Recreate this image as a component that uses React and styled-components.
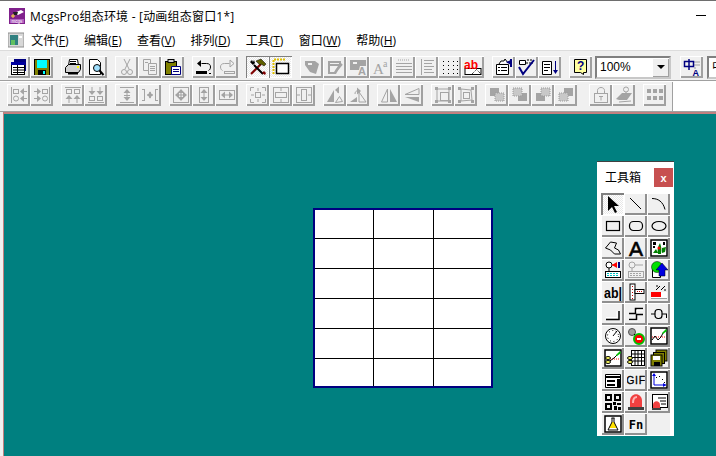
import React from 'react';
import styled, { createGlobalStyle } from 'styled-components';

const TABLE_ROWS = [0, 1, 2, 3, 4, 5];
const TABLE_COLS = [0, 1, 2];

// ------ icons, all on an 18x18 grid
const arrow = (x, y, dir) => {
    const d = {
        l: `M${x} ${y}l4 -3.5v7z`,
        r: `M${x} ${y}l-4 -3.5v7z`,
        u: `M${x} ${y}l-3.5 4h7z`,
        d: `M${x} ${y}l-3.5 -4h7z`,
    };
    return <path d={d[dir]} fill="currentColor" stroke="none" />;
};

const ln = (d, w = 1) => <path d={d} fill="none" stroke="currentColor" strokeWidth={w} />;

const layers = (a, b) => (
    <>
        <rect x={a} y={b} width="9" height="8" fill="currentColor" />
        <rect x={a === 2 ? 7 : 2} y={b === 2 ? 7 : 2} width="9" height="8" fill="#c8c8c8" />
        <rect x={a === 2 ? 7 : 2} y={b === 2 ? 7 : 2} width="9" height="8" fill="none" stroke="#9a9a9a" strokeDasharray="1 1" />
    </>
);

const icons = {
    newWin: (
        <>
            <rect x="4.5" y="1.5" width="11" height="11" fill="#fff" stroke="#000080" />
            <rect x="4" y="1" width="12" height="3" fill="#000080" />
            <rect x="1.5" y="4.5" width="13" height="12" fill="#fff" stroke="#000" />
            <rect x="1" y="4" width="14" height="3" fill="#0000a0" />
            {ln('M7.5 7v9M3 9.5h11M3 12h11M3 14.5h11', 1)}
        </>
    ),
    save: (
        <>
            <rect x="1" y="1" width="16" height="16" fill="#000" />
            <rect x="2" y="2" width="14" height="15" fill="#808000" />
            <rect x="4" y="2" width="10" height="8" fill="#00ffff" />
            <rect x="5" y="12" width="8" height="5" fill="#000" />
            <rect x="10" y="13" width="2" height="3" fill="#00ffff" />
        </>
    ),
    print: (
        <>
            <path d="M5.5 1.5h8l1 6h-10z" fill="#fff" stroke="#000" />
            <path d="M1.5 9.5l3-3h12v5l-2 3h-13z" fill="#d0d0d0" stroke="#000" />
            <path d="M4 15.5h10" stroke="#000" strokeWidth="2" />
            <rect x="13" y="8" width="2" height="2" fill="#ff0" />
            {ln('M6 3.5h6M6 5.5h6')}
        </>
    ),
    preview: (
        <>
            <path d="M2.5 1.5h8l3 3v12h-11z" fill="#fff" stroke="#000" />
            <circle cx="10" cy="10" r="3.5" fill="#a0e0ff" stroke="#000" />
            <path d="M12.5 12.5l4 4.5" stroke="#000" strokeWidth="2" />
        </>
    ),
    cut: (
        <>
            {ln('M6 1l5 10M12 1l-5 10')}
            <circle cx="6" cy="14" r="2.5" fill="none" stroke="currentColor" />
            <circle cx="12" cy="14" r="2.5" fill="none" stroke="currentColor" />
        </>
    ),
    copy: (
        <>
            <path d="M2.5 1.5h7v11h-7z" fill="#f0f0f0" stroke="currentColor" />
            <path d="M7.5 5.5h8v11h-8z" fill="#f0f0f0" stroke="currentColor" />
            {ln('M9 8.5h5M9 10.5h5M9 12.5h5M4 4.5h3')}
        </>
    ),
    paste: (
        <>
            <rect x="1.5" y="3.5" width="11" height="13" fill="#808000" stroke="#000" />
            <rect x="4" y="1.5" width="6" height="3" fill="#d0d0d0" stroke="#000" />
            <path d="M7.5 8.5h9v8h-9z" fill="#fff" stroke="#000080" />
            <path d="M9 11.5h6M9 13.5h6" stroke="#000080" />
        </>
    ),
    undo: (
        <>
            <path d="M6.5 5.5h5c3 0 4 1.5 4 3.5s-1 3-2 3.5" fill="none" stroke="#000" />
            <path d="M6 2l-4 3.5 4 3.5z" fill="#000" />
            <rect x="1" y="13" width="11" height="3" fill="#000" />
            {ln('M14 15.5h2')}
        </>
    ),
    redo: (
        <>
            {ln('M11.5 5.5h-5c-3 0-4 1.5-4 3.5s1 3 2 3.5')}
            <path d="M12 2l4 3.5-4 3.5z" fill="none" stroke="currentColor" />
            <rect x="6.5" y="13.5" width="10" height="2" fill="none" stroke="currentColor" />
        </>
    ),
    tools: (
        <>
            <path d="M2 16l10-10" stroke="#800000" strokeWidth="2" />
            <path d="M7 3l5-2 5 5-2 2-3-2-1 1-2-2z" fill="#606000" stroke="#000" strokeWidth=".5" />
            <path d="M14 16l-9-9" stroke="#000" strokeWidth="2" />
            <path d="M1 4l2-2 1 2 1-2 1 3-2 2z" fill="#000" />
            <path d="M13 15l3 2 1-2-2-2z" fill="#800000" />
        </>
    ),
    frame: (
        <>
            <path d="M1.5 16v-14.500h12" fill="none" stroke="#e0c000" strokeWidth="2" strokeDasharray="2 1" />
            <rect x="4.500" y="5.500" width="12" height="10" fill="#fff" stroke="#000" strokeWidth="1.500" />
        </>
    ),
    tag1: (
        <>
            <path d="M2 3h10l4 3-3 10-6-2-5-7z" fill="currentColor" />
            <rect x="5" y="5" width="4" height="2" fill="#f0f0f0" />
            {ln('M8 10l5 4', 1)}
        </>
    ),
    tag2: (
        <>
            <path d="M2 3h13v4l-5 9h-8z" fill="currentColor" />
            <rect x="4" y="5" width="9" height="1" fill="#f0f0f0" />
            <path d="M4 8h8l-4 6h-4z" fill="#f0f0f0" />
            <path d="M10 13l6-7" stroke="currentColor" strokeWidth="2" />
        </>
    ),
    tag3: (
        <>
            <path d="M1 2h16v6h-6l-1 4h-9z" fill="currentColor" />
            <rect x="4" y="4" width="4" height="2" fill="#f0f0f0" />
            <text x="9" y="17" fontFamily="Liberation Sans" fontSize="11" fontWeight="700" fill="currentColor">A</text>
        </>
    ),
    aa: (
        <>
            <text x="1" y="16" fontFamily="Liberation Serif" fontSize="15" fill="currentColor">A</text>
            <text x="11" y="9" fontFamily="Liberation Serif" fontSize="10" fill="currentColor">a</text>
        </>
    ),
    lines: (
        <>
            <path d="M3 2h12" stroke="currentColor" strokeDasharray="1 1" />
            <path d="M1 5h16v1h-16zM1 8h16v1h-16zM1 11h16v1h-16zM1 14h16v1h-16z" fill="currentColor" />
        </>
    ),
    list: (
        <>
            {ln('M3.500 1v16')}
            <path d="M6 2h10v1h-10zM6 5h8v1h-8zM6 8h10v1h-10zM6 11h8v1h-8zM6 14h10v1h-10z" fill="currentColor" />
        </>
    ),
    dots: (
        <path d="M2 3h1v1h-1zM7 3h1v1h-1zM12 3h1v1h-1zM16 3h1v1h-1zM2 7h1v1h-1zM7 7h1v1h-1zM12 7h1v1h-1zM16 7h1v1h-1zM2 11h1v1h-1zM7 11h1v1h-1zM12 11h1v1h-1zM16 11h1v1h-1zM2 15h1v1h-1zM7 15h1v1h-1zM12 15h1v1h-1zM16 15h1v1h-1z" fill="#000" />
    ),
    ab: (
        <>
            <rect x="1" y="10.500" width="16" height="6" fill="#fff" stroke="#000" />
            <path d="M11 10l6 6M8 16l4-4" stroke="#000" strokeDasharray="1 1" />
            <text x="0" y="11" fontFamily="Liberation Sans" fontSize="12" fontWeight="700" fill="#f00">ab</text>
        </>
    ),
    props: (
        <>
            <path d="M1.500 6.500h12v10h-12z" fill="#fff" stroke="#000" />
            <path d="M3 9.500h2M6 9.500h6M3 12.500h2M6 12.500h6" stroke="#000" />
            <path d="M4 6l2-3h3l1-2 3 4" fill="#fff" stroke="#000" />
            <path d="M11 4l5-2v5z" fill="#000080" />
            <rect x="15" y="1" width="2" height="8" fill="#000080" />
        </>
    ),
    check: (
        <>
            <path d="M1.500 2.500h6v4h-6z" fill="#fff" stroke="#000" />
            <path d="M9 2h6M8 5h7" stroke="#000" strokeDasharray="2 1" />
            <path d="M1 9l4 7L16 2" fill="none" stroke="#000080" strokeWidth="2" />
        </>
    ),
    sort: (
        <>
            <path d="M1.500 3.500h9v13h-9z" fill="#fff" stroke="#000" />
            <path d="M3 6.500h6M3 9.500h6M3 12.500h4" stroke="#000" />
            <path d="M14.500 3v11" stroke="#000080" />
            <path d="M12 12h5l-2.500 4z" fill="#000080" />
        </>
    ),
    help: (
        <>
            <path d="M2.500 1.500h12v13h-3v2l-3-2h-6z" fill="#ffffa0" stroke="#000" />
            <text x="5" y="12" fontFamily="Liberation Sans" fontSize="12" fontWeight="700" fill="#000080">?</text>
        </>
    ),
    zh: (
        <>
            <path d="M11 4h6M11 7h6M11 10h2" stroke="#a0a0a0" />
            <path d="M1.500 3.500h9v5h-9zM6 1v11" fill="none" stroke="#000080" strokeWidth="1.500" />
            <text x="9.500" y="18" fontFamily="Liberation Sans" fontSize="9" fontWeight="700" fill="#000080">A</text>
        </>
    ),

    // second row, all greyed
    alignL: (
        <>
            {ln('M1.500 1v16')}
            <rect x="3.500" y="3.500" width="5" height="4" fill="none" stroke="currentColor" />
            <circle cx="6" cy="12.500" r="2.500" fill="none" stroke="currentColor" />
            {arrow(10, 5.500, 'l')}{arrow(10, 12.500, 'l')}{ln('M13 5.500h4M13 12.500h4')}
        </>
    ),
    alignR: (
        <>
            {ln('M16.500 1v16')}
            <rect x="9.500" y="3.500" width="5" height="4" fill="none" stroke="currentColor" />
            <circle cx="12" cy="12.500" r="2.500" fill="none" stroke="currentColor" />
            {arrow(8, 5.500, 'r')}{arrow(8, 12.500, 'r')}{ln('M1 5.500h4M1 12.500h4')}
        </>
    ),
    alignT: (
        <>
            {ln('M1 1.500h16')}
            <rect x="2.500" y="3.500" width="5" height="4" fill="none" stroke="currentColor" />
            <rect x="10.500" y="3.500" width="5" height="4" fill="none" stroke="currentColor" />
            {arrow(5, 9, 'u')}{arrow(13, 9, 'u')}{ln('M5 12v5M13 12v5')}
        </>
    ),
    alignB: (
        <>
            {ln('M1 16.500h16')}
            <rect x="2.500" y="10.500" width="5" height="4" fill="none" stroke="currentColor" />
            <rect x="10.500" y="10.500" width="5" height="4" fill="none" stroke="currentColor" />
            {arrow(5, 9, 'd')}{arrow(13, 9, 'd')}{ln('M5 1v5M13 1v5')}
        </>
    ),
    spaceV: (
        <>
            {ln('M2 1.500h14M2 16.500h14M6 9.500h6M9 5v9')}
            {arrow(9, 3, 'u')}{arrow(9, 15, 'd')}
        </>
    ),
    spaceH: (
        <>
            {ln('M3.500 3v12M1 3.500h2.500M1 14.500h2.500M14.500 3v12M17 3.500h-2.500M17 14.500h-2.500M6 9h6')}
            {arrow(6, 9, 'l')}{arrow(12, 9, 'r')}
        </>
    ),
    centerAll: (
        <>
            <rect x="1.500" y="1.500" width="15" height="15" fill="none" stroke="currentColor" />
            {arrow(9, 3, 'u')}{arrow(9, 15, 'd')}{arrow(3, 9, 'l')}{arrow(15, 9, 'r')}
            {ln('M9 6v6M6 9h6')}
        </>
    ),
    centerV: (
        <>
            <rect x="4.500" y="1.500" width="9" height="15" fill="none" stroke="currentColor" />
            {arrow(9, 3, 'u')}{arrow(9, 15, 'd')}{ln('M9 6v6')}
        </>
    ),
    centerH: (
        <>
            <rect x="1.500" y="4.500" width="15" height="9" fill="none" stroke="currentColor" />
            {arrow(3, 9, 'l')}{arrow(15, 9, 'r')}{ln('M6 9h6')}
        </>
    ),
    midAll: (
        <>
            {ln('M1.500 5V1.500H5M13 1.500h3.500V5M1.500 13v3.500H5M13 16.500h3.500V13')}
            <rect x="6.500" y="6.500" width="5" height="5" fill="none" stroke="currentColor" />
            {ln('M9 2v3M9 13v3M2 9h3M13 9h3')}
        </>
    ),
    midH: (
        <>
            <rect x="1.500" y="1.500" width="15" height="15" fill="none" stroke="currentColor" />
            <rect x="3.500" y="6.500" width="11" height="5" fill="none" stroke="currentColor" />
            {ln('M9 2v3M9 13v3')}
        </>
    ),
    midV: (
        <>
            <rect x="1.500" y="1.500" width="15" height="15" fill="none" stroke="currentColor" />
            <rect x="6.500" y="3.500" width="5" height="11" fill="none" stroke="currentColor" />
            {ln('M2 9h3M13 9h3')}
        </>
    ),
    rotL: (
        <>
            <path d="M1 16l7-12v12z" fill="currentColor" />
            <path d="M9.500 16.500l7-1-3-5z" fill="none" stroke="currentColor" />
            {ln('M12 7c0-2-1-3-2-3')}{arrow(9, 4, 'l')}
        </>
    ),
    rotR: (
        <>
            <path d="M17 16l-7-10v10z" fill="none" stroke="currentColor" />
            <path d="M1 16l7-5v5z" fill="currentColor" />
            {ln('M6 8c0-2 1-3 2-3')}{arrow(12, 5, 'r')}
        </>
    ),
    flipH: (
        <>
            <path d="M7.500 3v13h-6z" fill="none" stroke="currentColor" />
            <path d="M10 3v13h7z" fill="currentColor" />
        </>
    ),
    flipV: (
        <>
            <path d="M16 2.500l-14 6h14z" fill="none" stroke="currentColor" />
            <path d="M16 16l-14-5h14z" fill="currentColor" />
        </>
    ),
    grow: (
        <>
            {ln('M3 3h12v12h-12z', 1)}
            <rect x="6.500" y="6.500" width="8" height="8" fill="none" stroke="currentColor" />
            <rect x="1" y="1" width="3" height="3" fill="currentColor" />
            <rect x="14" y="1" width="3" height="3" fill="currentColor" />
            <rect x="1" y="14" width="3" height="3" fill="currentColor" />
            <rect x="14" y="14" width="3" height="3" fill="currentColor" />
        </>
    ),
    shrink: (
        <>
            {ln('M4 3l10 1 1 10-11 1z', 1)}
            <rect x="6.500" y="6.500" width="6" height="6" fill="none" stroke="currentColor" />
            <rect x="1" y="1" width="3" height="3" fill="currentColor" />
            <rect x="14" y="1" width="3" height="3" fill="currentColor" />
            <rect x="1" y="14" width="3" height="3" fill="currentColor" />
            <rect x="14" y="14" width="3" height="3" fill="currentColor" />
        </>
    ),
    layer1: layers(2, 2),
    layer2: layers(7, 7),
    layer3: layers(2, 7),
    layer4: layers(7, 2),
    lock: (
        <>
            {ln('M5.500 8V4.500c0-4 7-4 7 0V8')}
            <rect x="2.500" y="7.500" width="13" height="9" fill="none" stroke="currentColor" />
            {ln('M7 10.500h4M9 10.500v4')}
        </>
    ),
    anchor: (
        <>
            <path d="M1 13l6-6h10l-5 7h-8z" fill="currentColor" />
            <circle cx="11" cy="3.500" r="2.500" fill="none" stroke="currentColor" />
            {ln('M11 6v4M4 16l12-1')}
        </>
    ),
    six: (
        <path d="M1 3h4v4h-4zM7 3h4v4h-4zM13 3h4v4h-4zM1 10h4v4h-4zM7 10h4v4h-4zM13 10h4v4h-4z" fill="currentColor" />
    ),

    // toolbox
    pointer: <path d="M4 1v15l4-4 3 6 2-1-3-6h5z" fill="#000" />,
    line: <path d="M3 3l11 11" stroke="#000" fill="none" />,
    curve: <path d="M2 3.500c6 0 11 3 13 11" stroke="#000" fill="none" />,
    rect: <rect x="2.500" y="4.500" width="13" height="9" fill="none" stroke="#000" strokeWidth="1.200" />,
    roundRect: <rect x="2.500" y="4.500" width="13" height="9" rx="4" fill="none" stroke="#000" strokeWidth="1.200" />,
    ellipse: <ellipse cx="9" cy="9" rx="7" ry="4.500" fill="none" stroke="#000" strokeWidth="1.200" />,
    poly: <path d="M1.500 9l5-6 6 1-2 5 4 2 2 4h-6l-4-4z" fill="none" stroke="#000" />,
    text: <text x="9" y="17" textAnchor="middle" fontFamily="Liberation Sans" fontSize="21" fontWeight="400" stroke="#000" strokeWidth=".6" fill="#000">A</text>,
    picture: (
        <>
            <rect x="1" y="1" width="16" height="16" fill="#fff" stroke="#000" strokeWidth="1.500" />
            <path d="M8 15c-1-4 0-8 2-11 1 3 2 6 1 11zM3 14l3-4 2 4zM12 9l4-1-1 5-3 1z" fill="#008000" />
            <path d="M3 3h3v3h-3zM13 3h2v3h-2zM3 7h2v2h-2z" fill="#000" />
            <circle cx="9" cy="9" r="1.500" fill="#f00" />
        </>
    ),
    device: (
        <>
            <circle cx="5" cy="4" r="3" fill="#fff" stroke="#000" />
            <path d="M5 7v3" stroke="#000" />
            <path d="M8 4h5" stroke="#f00" />
            <path d="M8 4l5-3v6z" fill="#f00" />
            <rect x="14" y="1" width="2" height="6" fill="#000080" />
            <rect x="1.500" y="10.500" width="15" height="6" fill="#fff" stroke="#000" />
            <path d="M3 12.500h12M3 14.500h12" stroke="#00c0c0" strokeDasharray="2 1" />
        </>
    ),
    deviceOff: (
        <>
            <circle cx="5" cy="4" r="3" fill="none" stroke="currentColor" />
            <path d="M5 7v3M8 4h8" stroke="currentColor" />
            <rect x="1.500" y="10.500" width="15" height="6" fill="none" stroke="currentColor" />
            <path d="M3 12.500h12M3 14.500h12" stroke="currentColor" strokeDasharray="2 1" />
        </>
    ),
    insert: (
        <>
            <path d="M2.500 6.500h8v10h-8z" fill="#fff" stroke="#000" />
            <circle cx="7" cy="6" r="5.500" fill="#00e000" stroke="#000" strokeWidth=".5" />
            <path d="M12 2l6 7h-3v6h-6v-6h-3z" fill="#0000e0" stroke="#000" strokeWidth=".5" />
        </>
    ),
    abl: <text x="0" y="15" fontFamily="Liberation Sans" fontSize="15" fontWeight="700" fill="#000" textLength="18" lengthAdjust="spacingAndGlyphs">ab|</text>,
    ruler: (
        <>
            <rect x="3" y="1" width="5" height="16" fill="#fff" stroke="#000" />
            <path d="M5.500 3v13" stroke="#c00000" strokeDasharray="1 2" />
            <rect x="8" y="6.500" width="9" height="4" fill="#fff" stroke="#000" />
            <path d="M10 8.500h6" stroke="#c00000" strokeDasharray="1 1" />
        </>
    ),
    gauge: (
        <>
            <rect x="1" y="9" width="16" height="7" fill="#fff" />
            <rect x="1" y="9" width="10" height="5" fill="#f00" />
            <path d="M1 15.500h16" stroke="#a0a0a0" />
            <path d="M6 7l4-4M11 7l4-4M6 3h2M14 7h2" stroke="#000" />
        </>
    ),
    stepBox: (
        <>
            <path d="M2 14.500h13V6" fill="none" stroke="#000" strokeWidth="1.500" />
            <path d="M2 12.500h11V6" fill="none" stroke="#fff" />
        </>
    ),
    zigzag: (
        <>
            <path d="M16 3.500H8.500V8.500H2M2 14.500H9.500V9.500H16" fill="none" stroke="#000" strokeWidth="1.500" />
            <path d="M16 5H10V7.500M2 16H11" fill="none" stroke="#fff" />
        </>
    ),
    slider: (
        <>
            <path d="M1 9h4M12 9h5M16.500 9v4" stroke="#000" />
            <rect x="5" y="4.500" width="7" height="9" rx="3" fill="none" stroke="#000" strokeWidth="1.200" />
        </>
    ),
    dial: (
        <>
            <circle cx="9" cy="9" r="7.500" fill="#fff" stroke="#000" />
            <path d="M9 9l4-5" stroke="#000" />
            <circle cx="9" cy="9" r="5.500" fill="none" stroke="#000" strokeDasharray="1 2.500" />
        </>
    ),
    lamp: (
        <>
            <circle cx="5" cy="5" r="3.500" fill="#a0a0a0" stroke="#505050" />
            <path d="M7 7l3 3" stroke="#000" />
            <circle cx="12" cy="12" r="5" fill="#f00" stroke="#00c000" strokeWidth="2" />
            <rect x="10" y="11" width="4" height="2" fill="#fff" />
        </>
    ),
    trend: (
        <>
            <rect x="1" y="1" width="16" height="16" fill="#fff" stroke="#000" strokeWidth="1.500" />
            <path d="M2 10h14" stroke="#f00" strokeDasharray="1 1" />
            <path d="M2 13l3-4 3 4 3-3 2-4" fill="none" stroke="#000" />
            <path d="M12 6l4-4 1 2-4 3z" fill="#00c000" />
        </>
    ),
    trendGear: (
        <>
            <rect x="1" y="1" width="16" height="16" fill="#fff" stroke="#000" strokeWidth="1.500" />
            <path d="M6 10h10" stroke="#f00" strokeDasharray="1 1" />
            <path d="M3 14l7-5 3-3" fill="none" stroke="#000" />
            <path d="M12 6l4-4 1 2-4 3z" fill="#00c000" />
            <ellipse cx="4" cy="9" rx="2.500" ry="1.500" fill="#ffff60" stroke="#000" />
            <ellipse cx="4" cy="13" rx="2.500" ry="1.500" fill="#ffff60" stroke="#000" />
        </>
    ),
    gridGear: (
        <>
            <rect x="4.500" y="1.500" width="13" height="15" fill="#fff" stroke="#000" />
            <path d="M8 2v14M11 2v14M14.500 2v14M5 5h12M5 8.500h12M5 12h12" stroke="#000" />
            <ellipse cx="3" cy="9" rx="2.500" ry="1.500" fill="#ffff60" stroke="#000" />
            <ellipse cx="3" cy="13" rx="2.500" ry="1.500" fill="#ffff60" stroke="#000" />
        </>
    ),
    disks: (
        <>
            <rect x="6" y="1" width="11" height="11" fill="#808000" stroke="#000" />
            <rect x="3.500" y="3.500" width="11" height="11" fill="#808000" stroke="#000" />
            <rect x="1" y="6" width="11" height="11" fill="#808000" stroke="#000" />
            <rect x="3" y="7" width="7" height="4" fill="#fff" />
            <rect x="4" y="13" width="6" height="4" fill="#000" />
        </>
    ),
    form: (
        <>
            <path d="M1.500 3.500h15v13h-15z" fill="#fff" stroke="#000" />
            <path d="M1 6h16" stroke="#000" strokeWidth="2" />
            <path d="M3 9h8v2h-8zM3 13h8v2h-8zM13 8h3v8h-3z" fill="#000" />
        </>
    ),
    gif: <text x="9" y="13" textAnchor="middle" fontFamily="Liberation Sans" fontSize="10.500" fontWeight="400" stroke="#000" strokeWidth=".3" fill="#000" letterSpacing=".6">GIF</text>,
    scatter: (
        <>
            <rect x="1" y="1" width="16" height="16" fill="#fff" stroke="#000" strokeWidth="1.500" />
            <path d="M4 3v11h12" fill="none" stroke="#0000e0" />
            <path d="M4 2l-2 3h4zM16 14l-3-2v4z" fill="#0000e0" />
            <path d="M6 6h1v1h-1zM9 5h1v1h-1zM12 8h1v1h-1zM14 11h1v1h-1z" fill="#000" />
        </>
    ),
    qr: (
        <path d="M1 1h7v7h-7zM3 3v3h3v-3zM10 1h7v7h-7zM12 3v3h3v-3zM1 10h7v7h-7zM3 12v3h3v-3zM9 9h3v3h-3zM13 10h4v2h-4zM10 13h3v4h-3zM14 14h3v3h-3z" fillRule="evenodd" fill="#000" />
    ),
    alarm: (
        <>
            <path d="M3 14V8c0-9 12-9 12 0v6z" fill="#f04040" />
            <path d="M6 10c0-4 2-6 4-6" fill="none" stroke="#ffb0b0" strokeWidth="2" />
            <rect x="1" y="14" width="16" height="3" fill="#404040" />
        </>
    ),
    alarmList: (
        <>
            <rect x="2.500" y="1.500" width="15" height="13" fill="#fff" stroke="#000" />
            <path d="M8 5h8M10 8h6M11 11h5" stroke="#000" />
            <path d="M3 16v-4c0-5 7-5 7 0v4z" fill="#f04040" />
            <rect x="2" y="15" width="9" height="2" fill="#404040" />
        </>
    ),
    flask: (
        <>
            <rect x="1" y="1" width="16" height="16" fill="#fff" stroke="#000" strokeWidth="1.500" />
            <path d="M5 13l3-6h2l3 6z" fill="#ffe000" />
            <path d="M7.500 3h3M8 3v4l-4 8h10l-4-8V3" fill="none" stroke="#000" />
        </>
    ),
    fn: <text x="9" y="14" textAnchor="middle" fontFamily="DejaVu Sans Mono" fontSize="12" fontWeight="700" fill="#000">Fn</text>,
    appIcon: (
        <>
            <rect x="0" y="0" width="16" height="16" fill="#80208c" />
            <path d="M5 5l7-3 3 2-6 3z" fill="#fff" />
            <path d="M4 4l5 0-1 3-3 0z" fill="#202020" />
            <path d="M2 8h4M4 6v4" stroke="#ffe040" />
            <rect x="1" y="11" width="14" height="4" fill="#b060c0" />
            <text x="8" y="15" textAnchor="middle" fontFamily="Liberation Sans" fontSize="4.500" fill="#fff">mcgs</text>
        </>
    ),
    docIcon: (
        <>
            <rect x="0" y="1" width="16" height="14" fill="#d8d8d8" stroke="#909090" />
            <rect x="2" y="3" width="8" height="10" fill="#308080" />
            <rect x="3" y="8" width="4" height="5" fill="#60c060" />
            <rect x="11" y="4" width="3" height="2" fill="#fff" />
        </>
    ),
};

const row1 = [
    ['newWin', 'save'],
    ['print', 'preview'],
    ['cut*', 'copy*', 'paste'],
    ['undo', 'redo*'],
    ['tools!', 'frame!'],
    ['tag1*', 'tag2*', 'tag3*', 'aa*', 'lines*', 'list*', 'dots', 'ab'],
    ['props', 'check', 'sort'],
];

const row2 = [
    ['alignL', 'alignR'],
    ['alignT', 'alignB'],
    ['spaceV', 'spaceH'],
    ['centerAll', 'centerV', 'centerH'],
    ['midAll', 'midH', 'midV'],
    ['rotL', 'rotR'],
    ['flipH', 'flipV'],
    ['grow', 'shrink'],
    ['layer1', 'layer2', 'layer3', 'layer4'],
];

const boxTools = [
    'pointer!', 'line', 'curve',
    'rect', 'roundRect', 'ellipse',
    'poly', 'text', 'picture',
    'device', 'deviceOff*', 'insert',
    'abl', 'ruler', 'gauge',
    'stepBox', 'zigzag', 'slider',
    'dial', 'lamp', 'trend',
    'trendGear', 'gridGear', 'disks',
    'form', 'gif', 'scatter',
    'qr', 'alarm', 'alarmList',
    'flask', 'fn',
];

const menus = [
    ['文件', 'F'], ['编辑', 'E'], ['查看', 'V'], ['排列', 'D'],
    ['工具', 'T'], ['窗口', 'W'], ['帮助', 'H'],
];

// name ending in * is greyed out, ending in ! is latched down
const ToolButton = ({ name, as: Btn = Button, grey }) => {
    const id = name.replace(/[*!]$/, '');
    return (
        <Btn $off={grey || name.endsWith('*')} $down={name.endsWith('!')}>
            <Glyph viewBox="0 0 18 18">{icons[id]}</Glyph>
        </Btn>
    );
};

const App = () => {
    return (
        <Page>
            <GlobalStyle />
            <TitleBar>
                <AppIcon viewBox="0 0 16 16">{icons.appIcon}</AppIcon>
                <TitleText>McgsPro组态环境 - [动画组态窗口1*]</TitleText>
                <Minimize />
            </TitleBar>
            <MenuBar>
                <AppIcon viewBox="0 0 16 16">{icons.docIcon}</AppIcon>
                {menus.map(([label, key]) => (
                    <MenuItem key={key}>{label}(<u>{key}</u>)</MenuItem>
                ))}
            </MenuBar>
            <TopBar>
                {row1.map((group, i) => (
                    <Group key={i}>
                        {group.map((n) => <ToolButton key={n} name={n} />)}
                    </Group>
                ))}
                <Group $right={3}>
                    <ToolButton name="help" />
                </Group>
                <Combo $width={76}>
                    <ComboText>100%</ComboText>
                    <ComboArrow><Caret /></ComboArrow>
                </Combo>
                <Group $left={9} $right={4}>
                    <ToolButton name="zh" />
                </Group>
                <Combo $width={40}>
                    <ComboText>中文</ComboText>
                </Combo>
            </TopBar>
            <SecondBar>
                <SecondInner>
                    {row2.map((group, i) => (
                        <Group key={i}>
                            {group.map((n) => <ToolButton key={n} name={n} grey />)}
                        </Group>
                    ))}
                    <Group $left={4}>
                        <ToolButton name="lock" grey />
                        <ToolButton name="anchor" grey />
                    </Group>
                    <Group>
                        <ToolButton name="six" grey />
                    </Group>
                </SecondInner>
            </SecondBar>
            <Canvas>
                <DataTable>
                    {TABLE_ROWS.map((r) => TABLE_COLS.map((c) => (
                        <Cell key={`${r}-${c}`} $lastRow={r === 5} $lastCol={c === 2} />
                    )))}
                </DataTable>
                <Toolbox>
                    <BoxHeader>
                        <BoxTitle>工具箱</BoxTitle>
                        <CloseButton>x</CloseButton>
                    </BoxHeader>
                    <BoxGrid>
                        {boxTools.map((n) => <ToolButton key={n} name={n} as={BoxButton} />)}
                    </BoxGrid>
                </Toolbox>
            </Canvas>
        </Page>
    );
};

export default App;

// ------ UI Section
const GlobalStyle = createGlobalStyle`
    html, body {
        margin:0;
        padding:0;
        overflow:hidden;
        background:#fff;
    }
`;

const Page = styled.div`
    width:716px;
    height:456px;
    display:flex;
    flex-direction:column;
    overflow:hidden;
    border-top:1px solid #6e6e6e;
    box-sizing:border-box;
    background:#f0f0f0;
    font-family:"Open Sans","Noto Sans CJK SC",sans-serif;
    font-size:12px;
    color:#000;
`;

const TitleBar = styled.div`
    height:29px;
    display:flex;
    align-items:center;
    padding-left:9px;
    background:#fff;
    flex:none;
`;

const AppIcon = styled.svg`
    width:16px;
    height:16px;
    flex:none;
`;

const TitleText = styled.span`
    margin-left:5px;
    font-size:12px;
    letter-spacing:.2px;
`;

const Minimize = styled.span`
    width:10px;
    height:1px;
    margin-left:auto;
    margin-right:10px;
    background:#000;
`;

const MenuBar = styled.div`
    height:20px;
    display:flex;
    align-items:center;
    gap:15.300px;
    padding-left:8px;
    background:#fff;
    flex:none;
    svg {
        margin-right:-8px;
    }
`;

const MenuItem = styled.span`
    font-size:12px;
    white-space:nowrap;
`;

const TopBar = styled.div`
    height:31px;
    display:flex;
    align-items:center;
    padding:3px 0 0 7px;
    box-sizing:border-box;
    background:#f0f0f0;
    border-top:1px solid #dcdcdc;
    border-bottom:1px solid #a0a0a0;
    flex:none;
    overflow:hidden;
`;

const SecondBar = styled.div`
    height:31px;
    background:#fff;
    flex:none;
    border-top:1px solid #fff;
    border-bottom:1px solid #a0a0a0;
    box-sizing:border-box;
`;

const SecondInner = styled.div`
    width:673px;
    height:100%;
    display:flex;
    align-items:center;
    padding-left:7px;
    padding-bottom:3px;
    box-sizing:border-box;
    background:#f0f0f0;
    border-right:1px solid #a0a0a0;
`;

const Group = styled.div`
    display:flex;
    flex:none;
    margin-left:${(p) => p.$left || 0}px;
    margin-right:${(p) => (p.$right === undefined ? 8 : p.$right)}px;
`;

const Button = styled.div`
    width:23px;
    height:22px;
    flex:none;
    display:flex;
    align-items:center;
    justify-content:center;
    box-sizing:border-box;
    color:${(p) => (p.$off ? '#a4a4a4' : '#000')};
    background:${(p) => (p.$down ? 'repeating-conic-gradient(#fff 0 25%, #e8e8e8 0 50%) 0 0 / 2px 2px' : '#f0f0f0')};
    box-shadow:${(p) => (p.$down
        ? 'inset 1px 1px 0 #808080, inset -1px -1px 0 #fff'
        : 'inset 1px 1px 0 #fff, inset -2px -2px 0 #a0a0a0')};
`;

const BoxButton = styled(Button)`
    box-shadow:${(p) => (p.$down
        ? 'inset 2px 2px 0 #808080, inset -1px -1px 0 #fff'
        : 'inset 1px 1px 0 #fff, inset -2px -2px 0 #909090')};
`;

const Glyph = styled.svg`
    width:18px;
    height:18px;
    display:block;
`;

const Combo = styled.div`
    width:${(p) => p.$width}px;
    height:23px;
    flex:none;
    display:flex;
    box-sizing:border-box;
    background:#fff;
    border:2px solid #808080;
    border-right-color:#c8c8c8;
    border-bottom-color:#c8c8c8;
    overflow:hidden;
`;

const ComboText = styled.span`
    flex:1;
    padding-left:3px;
    font-family:"Liberation Sans","Noto Sans CJK SC",sans-serif;
    font-size:12px;
    line-height:19px;
    white-space:nowrap;
`;

const ComboArrow = styled.span`
    width:17px;
    display:flex;
    align-items:center;
    justify-content:center;
    background:#f0f0f0;
    box-shadow:inset 1px 1px 0 #fff, inset -1px -1px 0 #a0a0a0;
`;

const Caret = styled.span`
    width:0;
    height:0;
    border-left:4px solid transparent;
    border-right:4px solid transparent;
    border-top:4px solid #000;
`;

const Canvas = styled.div`
    position:relative;
    flex:1;
    margin-left:3px;
    background:#008080;
    border-top:2px solid #c08080;
    border-left:1px solid #c08080;
`;

const DataTable = styled.div`
    position:absolute;
    left:309px;
    top:94px;
    width:180px;
    height:180px;
    box-sizing:border-box;
    display:grid;
    grid-template-columns:59px 60px 57px;
    grid-template-rows:29px 30px 30px 30px 30px 27px;
    background:#fff;
    border:2px solid #000080;
`;

const Cell = styled.div`
    box-sizing:border-box;
    border-right:${(p) => (p.$lastCol ? 'none' : '1px solid #000')};
    border-bottom:${(p) => (p.$lastRow ? 'none' : '1px solid #000')};
`;

const Toolbox = styled.div`
    position:absolute;
    left:593px;
    top:47px;
    width:77px;
    height:275px;
    background:#fff;
    padding:0 4px;
    box-sizing:border-box;
    border-top:1px solid #404040;
`;

const BoxHeader = styled.div`
    height:31px;
    display:flex;
    align-items:center;
    justify-content:space-between;
    margin-right:-3px;
    padding-left:4px;
    padding-bottom:2px;
    box-sizing:border-box;
`;

const BoxTitle = styled.span`
    font-size:12px;
`;

const CloseButton = styled.span`
    width:19px;
    height:19px;
    margin-top:2px;
    display:flex;
    align-items:center;
    justify-content:center;
    background:#c75050;
    color:#fff;
    font-family:"Liberation Sans",sans-serif;
    font-size:11px;
    font-weight:700;
`;

const BoxGrid = styled.div`
    display:grid;
    grid-template-columns:repeat(3, 23px);
    grid-auto-rows:22px;
    width:69px;
    height:242px;
    background:#f0f0f0;
`;
